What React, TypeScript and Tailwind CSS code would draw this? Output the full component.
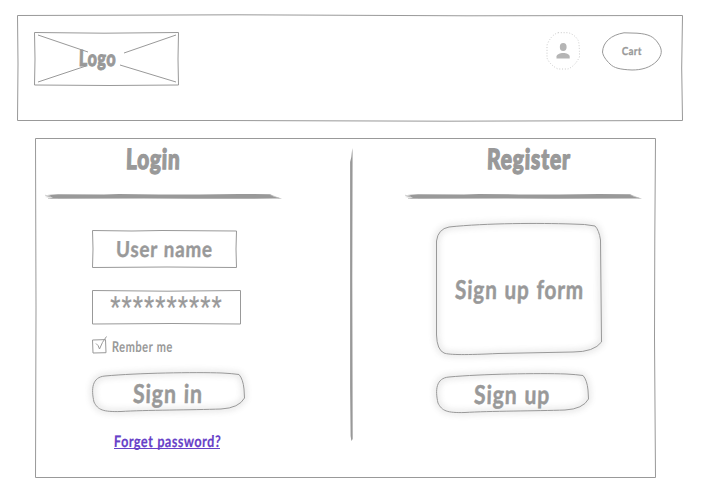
import { useLayoutEffect, useRef, useState } from "react";
import type { ReactNode } from "react";

/** Marker lettering, condensed to fill the width of its box. */
function Lettering({ text, className }: { text: string; className: string }) {
  const box = useRef<HTMLDivElement>(null);
  const label = useRef<HTMLSpanElement>(null);
  const [ratio, setRatio] = useState(1);
  useLayoutEffect(() => {
    if (box.current && label.current) {
      setRatio(box.current.clientWidth / label.current.offsetWidth);
    }
  }, [text]);
  return (
    <div ref={box} className={`flex shrink-0 leading-none tracking-[0.04em] whitespace-nowrap [word-spacing:0.04em] ${className}`}>
      <span ref={label} className="block shrink-0 origin-left" style={{ transform: `scaleX(${ratio}) skewX(-2deg)` }}>
        {text}
      </span>
    </div>
  );
}

function Frame({ w, h, d, className, children, shadow = false }: {
  w: number; h: number; d: string; className: string; children?: ReactNode; shadow?: boolean;
}) {
  return (
    <div className={`relative shrink-0 ${className}`}>
      <svg className="pointer-events-none absolute inset-0 overflow-visible" width={w} height={h} fill="none" stroke="#999" strokeLinejoin="round">
        {shadow && <path d={d} stroke="#777" strokeWidth="3" opacity="0.3" className="blur-[3px]" />}
        <path d={d} strokeWidth="1" />
      </svg>
      {children}
    </div>
  );
}

function BrushLine() {
  return (
    <svg className="block shrink-0" width="238" height="8" viewBox="0 0 238 8">
      <path d="M3 2 L14 1.2 L60 1.4 L75 1 L115 1.4 L155 1.6 L195 1 L226 1.2 L230 3.4 L238 5.4 L229 5.6 L150 5.8 L100 5.5 L5 5.8 L9 4.6 L1 4 L7 3 Z" fill="#999" />
      <path d="M1 2.2 L7 3.6 M4 5.5 L14 5.5 M226 1.6 L235 5.2" stroke="#bbb" strokeWidth=".7" />
    </svg>
  );
}

const buttonPath = "M13 5 C45 2 103 1 130 2 Q140 2.5 147 3.5 Q151 8 152 18 L152.5 27 Q147 37 129 38 C101 39 52 39 29 40.5 C11 41 6 39 2 31 C-1 18 0 6 13 5 Z";

export default function App() {
  return (
    <main className="flex h-[500px] w-[710px] flex-col bg-white pt-[14px] pl-[17px] font-['Lato','Noto_Sans',sans-serif] font-bold text-[#999]">
      <Frame w={666} h={108} d="M.5 1.5 L220 .8 L450 1.8 L665.5 1.5 L664.7 54 L665.5 106.5 L430 107.2 L200 106.5 L.5 106.5 L1 50 Z" className="flex h-[108px] w-[666px] items-start">
        <Frame w={146} h={54} d="M.5 .5 L70 1.2 L144.5 .5 L144 27 L144.5 53 L75 53.5 L.5 53 L1 27 Z" className="mt-[18px] ml-[17px] h-[54px] w-[146px] pt-[15px] pl-[45px]">
          <svg className="absolute inset-0" width="146" height="54" fill="none" stroke="#999" strokeWidth="1">
            <path d="M4 3 L54 20 M142 3 L90 21 M4 50 L52 34 M142 50 L86 33" />
          </svg>
          <Lettering text="Logo" className="relative w-[37px] text-[22px] font-black [-webkit-text-stroke:1px_#999]" />
        </Frame>
        <div className="mt-[18px] ml-[366px] h-[38px] w-[35px]">
          <svg width="35" height="38" viewBox="0 0 35 38">
            <path d="M12 .7 H22 Q28 2 32 8 Q33.5 11 33.5 25 Q29 34 22 37 H12 Q4 33 1 26 V13 Q5 3 12 .7Z" fill="none" stroke="#bbb" strokeWidth=".8" strokeDasharray="1 1.8" />
            <ellipse cx="17.2" cy="15" rx="3.4" ry="4" fill="#b5b5b5" />
            <path d="M10.5 26.5 V24.5 C11 19.8 23.5 19.8 23.7 24.5 V26.5Z" fill="#b5b5b5" />
          </svg>
        </div>
        <Frame w={60} h={38} d="M22 .8 L35 1.2 C47 2 52 5 56 11 C61 18 60 23 55 29 C48 36 39 38 30 38 C18 37.5 12 36 8 32 C4 28 1 24 .5 20 C1 10 9 3 22 .8 Z" className="mt-[18px] ml-[21px] h-[38px] w-[60px] pt-[13px] pl-[20px]">
          <Lettering text="Cart" className="w-[20px] text-[11px] [-webkit-text-stroke:0.3px_#999]" />
        </Frame>
      </Frame>

      <Frame w={621} h={340} d="M.5 .5 H620.5 L619.8 100 L619.5 200 L620.5 339.5 H.5 L1 170 Z" className="mt-[16px] ml-[18px] flex h-[340px] w-[621px]">
        <section className="flex w-[315px] shrink-0 flex-col pt-[6px]">
          <Lettering text="Login" className="ml-[91px] h-[28px] w-[55px] text-[28px] font-black [-webkit-text-stroke:1.3px_#999]" />
          <div className="mt-[21px] ml-[9px]"><BrushLine /></div>
          <Frame w={145} h={38} d="M.5 .5 L40 1 L70 .5 L144.5 1 L144 19 L144.5 37.5 L75 37 L.5 37.5 L1 19 Z" className="mt-[29px] ml-[57px] h-[38px] w-[145px] pt-[8px] pl-[24px]">
            <Lettering text="User name" className="w-[97px] text-[22px] [-webkit-text-stroke:0.4px_#999]" />
          </Frame>
          <Frame w={149} h={35} d="M.5 .5 L75 1.2 L148.5 .5 V34 L80 33.5 L.5 34 Z" className="mt-[22px] ml-[57px] h-[35px] w-[149px] pt-[0.5px] pl-[17.5px]">
            <Lettering text="**********" className="w-[113px] font-['Liberation_Sans',sans-serif] text-[33px] font-normal [-webkit-text-stroke:0.3px_#999]" />
          </Frame>
          <div className="mt-[12px] ml-[57px] flex h-[18px] items-start">
            <svg className="shrink-0 overflow-visible" width="17" height="18" fill="none" stroke="#999">
              <path d="M.5 3 L13.5 2.6 L14 15.7 L1 16 Z" />
              <path d="M4 6.5 Q6.5 8 7.5 12 Q10 5 14.5 -.5" strokeWidth="1" />
            </svg>
            <Lettering text="Rember me" className="mt-[2px] ml-[2.5px] w-[61px] text-[15px]" />
          </div>
          <Frame w={154} h={41} d={buttonPath} shadow className="mt-[16px] ml-[57px] h-[41px] w-[154px] pt-[9px] pl-[41px]">
            <Lettering text="Sign in" className="w-[70px] text-[26px] [-webkit-text-stroke:0.5px_#999]" />
          </Frame>
          <div className="mt-[20px] ml-[79px] w-[106px] border-b border-[#6740c8] text-[#6740c8]">
            <Lettering text="Forget password?" className="h-[16px] w-[107px] pt-[0.5px] text-[16px] [-webkit-text-stroke:0.2px_#6740c8]" />
          </div>
        </section>

        <svg className="mt-[10px] shrink-0" width="4" height="294">
          <path d="M2.3 0 L1.3 9 L.1 14 V240 L.6 288 L1.4 293 L2.7 291 L2.3 130 L2.6 5Z" fill="#999" />
        </svg>

        <section className="flex flex-col pt-[6px]">
          <Lettering text="Register" className="ml-[132.5px] h-[28px] w-[84px] text-[28px] font-black [-webkit-text-stroke:1.3px_#999]" />
          <div className="mt-[21px] ml-[50px]"><BrushLine /></div>
          <Frame w={166} h={132} d="M13 5 C50 1 105 1 135 2 Q150 2 159 4 Q163 8 164.5 18 L165.5 120 Q158 130 137 130 L62 131.5 C31 133 13 133 8 131 Q1 128 0.5 113 V19 Q2 7 13 5 Z" shadow className="mt-[21px] ml-[82px] h-[132px] w-[166px] pt-[53.5px] pl-[19px]">
            <Lettering text="Sign up form" className="w-[129px] text-[26px] [-webkit-text-stroke:0.5px_#999]" />
          </Frame>
          <Frame w={154} h={41} d={buttonPath} shadow className="mt-[18px] ml-[82px] h-[41px] w-[154px] pt-[8.5px] pl-[38px]">
            <Lettering text="Sign up" className="w-[76px] text-[26px] [-webkit-text-stroke:0.5px_#999]" />
          </Frame>
        </section>
      </Frame>
    </main>
  );
}
